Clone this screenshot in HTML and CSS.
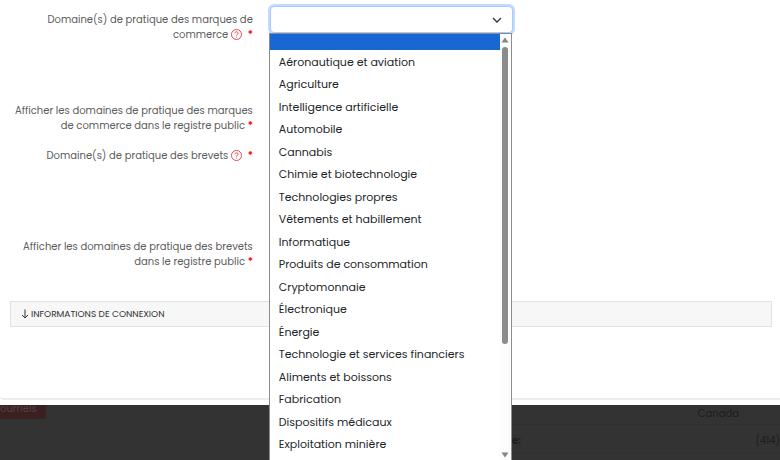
FILE: index.html
```html
<!DOCTYPE html>
<html lang="fr">
<head>
<meta charset="utf-8">
<meta name="viewport" content="width=device-width, initial-scale=1">
<title>Domaines de pratique</title>
<link rel="stylesheet" href="styles.css">
</head>
<body>
<main class="modal">
  <form class="panel">
    <div class="row row-tall">
      <div class="label">
        <label for="tm-areas">Domaine(s) de pratique des marques de commerce</label>
        <svg class="help" viewBox="0 0 16 16" aria-hidden="true"><circle cx="8" cy="8" r="7.3"/><path d="M5.7 6.2C5.8 4.7 6.8 4 8 4s2.3.8 2.3 2c0 1.700-2.200 1.700-2.200 3.600"/><path d="M8.100 11v1.300"/></svg>
        <span class="required spaced">*</span>
      </div>
      <div class="field">
        <select id="tm-areas" class="select"><option></option></select>
        <svg class="chevron" viewBox="0 0 10 6" aria-hidden="true"><path d="M1 1l4 4 4-4"/></svg>
        <div class="popup">
          <ul class="options" role="listbox" aria-label="Domaines">
            <li class="selected" role="option" aria-selected="true"></li>
            <li role="option">Aéronautique et aviation</li>
            <li role="option">Agriculture</li>
            <li role="option">Intelligence artificielle</li>
            <li role="option">Automobile</li>
            <li role="option">Cannabis</li>
            <li role="option">Chimie et biotechnologie</li>
            <li role="option">Technologies propres</li>
            <li role="option">Vêtements et habillement</li>
            <li role="option">Informatique</li>
            <li role="option">Produits de consommation</li>
            <li role="option">Cryptomonnaie</li>
            <li role="option">Électronique</li>
            <li role="option">Énergie</li>
            <li role="option">Technologie et services financiers</li>
            <li role="option">Aliments et boissons</li>
            <li role="option">Fabrication</li>
            <li role="option">Dispositifs médicaux</li>
            <li role="option">Exploitation minière</li>
          </ul>
          <div class="scrollbar">
            <svg class="arrow" viewBox="0 0 8 6" aria-hidden="true"><path d="M4 0.500L7.500 5.500h-7z"/></svg>
            <div class="track"><div class="thumb"></div></div>
            <svg class="arrow" viewBox="0 0 8 6" aria-hidden="true"><path d="M4 5.500L7.500 0.500h-7z"/></svg>
          </div>
        </div>
      </div>
    </div>
    <div class="row">
      <div class="label">Afficher les domaines de pratique des marques de commerce dans le registre public <span class="required">*</span></div>
    </div>
    <div class="row row-tall">
      <div class="label">
        <span>Domaine(s) de pratique des brevets</span>
        <svg class="help" viewBox="0 0 16 16" aria-hidden="true"><circle cx="8" cy="8" r="7.3"/><path d="M5.7 6.2C5.8 4.7 6.8 4 8 4s2.3.8 2.3 2c0 1.700-2.200 1.700-2.200 3.600"/><path d="M8.100 11v1.300"/></svg>
        <span class="required spaced">*</span>
      </div>
    </div>
    <div class="row">
      <div class="label">Afficher les domaines de pratique des brevets dans le registre public <span class="required">*</span></div>
    </div>
    <button type="button" class="accordion">
      <svg class="down" viewBox="0 0 8 10" aria-hidden="true"><path d="M4 0.500v8.500M1 6l3 3 3-3"/></svg>
      INFORMATIONS DE CONNEXION
    </button>
  </form>
</main>
<section class="behind">
  <button type="button" class="mail">ourriels</button>
  <dl class="details">
    <div class="detail"><dt></dt><dd>Canada</dd></div>
    <div class="detail phone"><dt>e:</dt><dd>(414)</dd></div>
  </dl>
</section>
</body>
</html>
```
FILE: styles.css
```css
* {
  box-sizing: border-box;
}

body {
  margin: 0;
  height: 100vh;
  overflow: hidden;
  background: #333;
  color: #5c5c5c;
  font: 10px/15px Poppins, Inter, "Liberation Sans", sans-serif;
}

.modal {
  position: relative;
  z-index: 1;
  padding-bottom: 5px;
  background: #fff;
}

.panel {
  padding: 6px 8px 71px 10px;
  border-bottom: 2px solid #ececec;
  border-radius: 0 0 0 4px;
}

.row {
  display: grid;
  grid-template-columns: 32% 32% 1fr;
  column-gap: 16px;
  min-height: 45px;
}

.row-tall {
  min-height: 91px;
}

.label {
  padding: 6px 1px 0 0;
  text-align: right;
}

.help {
  width: 11px;
  height: 11px;
  vertical-align: -2px;
  fill: none;
  stroke: #e0434b;
  stroke-width: 1.4;
}

.required {
  color: #f00;
  font-weight: 600;
}

.spaced {
  margin-left: 3px;
}

.field {
  position: relative;
  padding-right: 1px;
}

.select {
  display: block;
  width: 100%;
  height: 27px;
  border: 1px solid #a5cafe;
  border-radius: 4px;
  outline: none;
  background: #fff;
  box-shadow: 0 0 0 2px #c2dbfe;
  appearance: none;
  font: inherit;
}

.chevron {
  position: absolute;
  top: 11px;
  right: 12px;
  width: 10px;
  height: 6px;
  fill: none;
  stroke: #343a40;
  stroke-width: 1.4;
}

.popup {
  position: absolute;
  z-index: 2;
  top: 27px;
  left: -1px;
  right: 2px;
  display: flex;
  height: 427px;
  border: solid #8c8c8c;
  border-width: 1px 1px 0;
  background: #fff;
  color: #212529;
  font-size: 11px;
}

.options {
  display: grid;
  flex: 1;
  grid-template-rows: 16px repeat(18, 1fr);
  margin: 0;
  padding: 0 0 5px;
  list-style: none;
}

.options li {
  display: flex;
  align-items: center;
  padding: 2px 0 0 9px;
}

.options .selected {
  background: #1967d2;
}

.scrollbar {
  display: flex;
  flex-direction: column;
  align-items: center;
  gap: 4px;
  width: 11px;
  padding: 3px 0 2px;
  background: #fcfcfc;
}

.arrow {
  width: 8px;
  height: 6px;
  fill: #858585;
}

.track {
  flex: 1;
  width: 6px;
}

.thumb {
  height: 74%;
  border-radius: 3px;
  background: #8b8b8b;
}

.accordion {
  display: flex;
  align-items: center;
  gap: 2px;
  width: 100%;
  height: 26px;
  margin-top: 23px;
  padding: 0 10px;
  border: 1px solid #e2e2e2;
  background: #f7f7f7;
  color: #333;
  font: 9px/15px Poppins, Inter, "Liberation Sans", sans-serif;
}

.down {
  width: 8px;
  height: 10px;
  fill: none;
  stroke: #333;
}

.behind {
  display: grid;
  grid-template-columns: 46px 1fr;
  align-items: start;
  column-gap: 466px;
}

.mail {
  height: 22px;
  margin-top: -8px;
  padding: 0;
  border: 0;
  border-radius: 0 0 3px 0;
  background: #3b2021;
  color: #554142;
  font: inherit;
  text-align: left;
}

.details {
  margin: 0;
  color: #1c1c1c;
}

.detail {
  display: flex;
  justify-content: space-between;
  height: 20px;
  padding: 1px 41px 0 0;
  border-bottom: 1px solid #303030;
}

.phone {
  height: 29px;
  padding: 8px 0 0;
}

.detail dt {
  font-weight: 600;
}

.detail dd {
  margin: 0;
}
```
